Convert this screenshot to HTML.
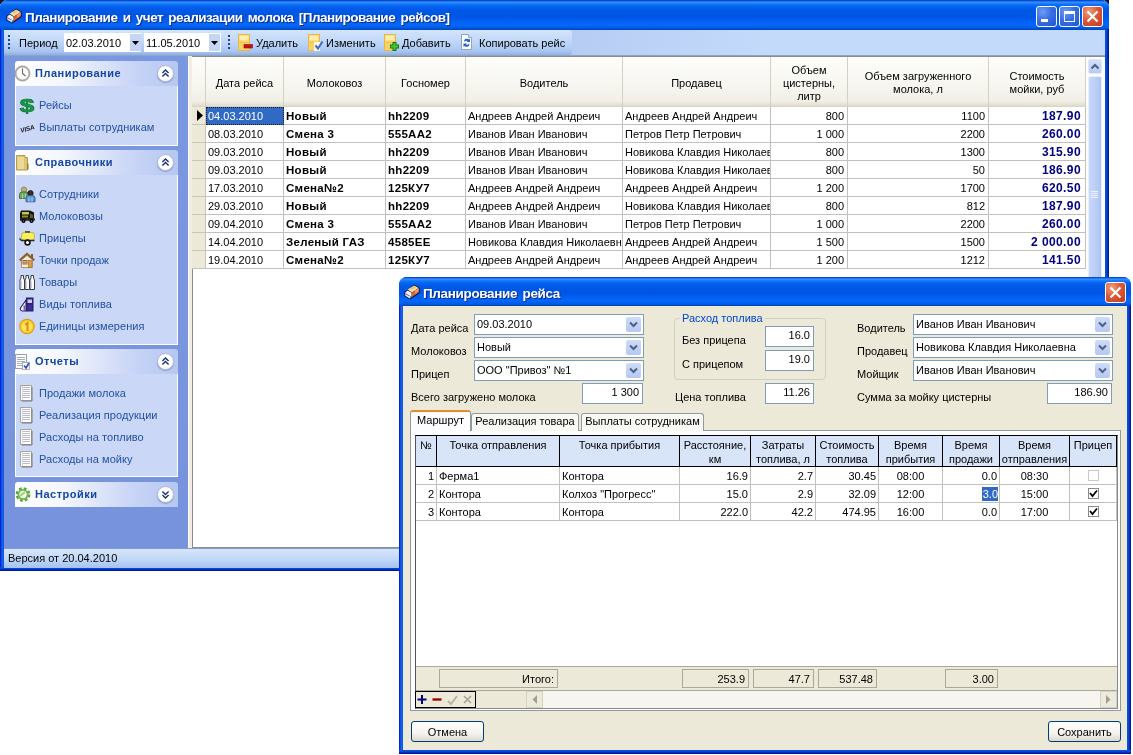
<!DOCTYPE html>
<html lang="ru">
<head>
<meta charset="utf-8">
<title>Планирование и учет реализации молока</title>
<style>
*{box-sizing:border-box;margin:0;padding:0}
html,body{width:1133px;height:755px;overflow:hidden;background:#fff}
body{position:relative;font-family:"Liberation Sans",sans-serif;font-size:11px;color:#000}
.abs,.abs>*{position:absolute}
div,span{white-space:nowrap}
#main,#dlg{will-change:transform}
/* ---------- main window ---------- */
#main{position:absolute;left:0;top:0;width:1109px;height:571px;background:#0a50d0;border-radius:7px 7px 0 0;overflow:hidden}
.cn{position:absolute;top:0;width:4px;height:4px;background:#16131f}
.tbar{position:absolute;left:0;top:0;right:0;height:30px;background:linear-gradient(to bottom,#0a3fb4 0%,#0a52e0 3%,#3a93ff 7%,#2a8bff 9%,#0f74fb 14%,#0464f0 22%,#0058e6 32%,#0055e4 55%,#0260f4 72%,#0468fb 82%,#035fee 90%,#0050d4 96%,#0042b8 100%)}
.ttl{position:absolute;color:#fff;font-weight:bold;font-size:13.5px;text-shadow:1px 1px 0 #0a2a80;letter-spacing:-.35px;word-spacing:2px}
.bl{position:absolute;left:0;top:29px;bottom:0;width:4px;background:linear-gradient(to right,#0019cf,#0831d9 25%,#166aee 50%,#0855dd 100%)}
.br{position:absolute;right:0;top:29px;bottom:0;width:4px;background:linear-gradient(to left,#00138c,#001ea0 25%,#0441d8 50%,#0855dd 100%)}
.bb{position:absolute;left:0;right:0;bottom:0;height:4px;background:linear-gradient(to top,#00138c,#001ea0 25%,#0441d8 50%,#0855dd 100%)}
.wb{position:absolute;width:21px;height:21px;border:1px solid #fff;border-radius:3px;background:radial-gradient(circle at 30% 25%,#6b9cf5 0%,#3a6fe3 45%,#2453cc 100%)}
.wb.cl{background:radial-gradient(circle at 30% 25%,#f0a080 0%,#dc5a38 45%,#c2391c 100%)}
#mtool{position:absolute;left:4px;top:30px;width:1101px;height:26px;background:linear-gradient(to right,#b6ccf3 0,#b6ccf3 568px,#c4dafb 760px,#c4dafb 100%)}
#mtool .bar{position:absolute;left:0;top:0;width:568px;height:25px;background:linear-gradient(to bottom,#d3e4fb 0%,#c1d8f8 45%,#a9c6f2 85%,#8fb0e6 100%);border-radius:0 3px 3px 0}
#mtool .ln{position:absolute;left:0;right:0;bottom:0;height:1px;background:#93a3bf}
.t11{font-size:11px}
#side{position:absolute;left:4px;top:56px;width:184px;height:492px;background:linear-gradient(to bottom,#7a98e0,#7893dd)}
.ph{position:absolute;left:11px;width:163px;height:25px;border-radius:3px 3px 0 0;background:linear-gradient(to right,#ffffff 0%,#f3f6fd 30%,#c6d3f6 75%,#b6c7f0 100%)}
.ph b{position:absolute;left:20px;top:6px;font-size:11px;color:#1546a6;letter-spacing:.5px}
.pb{position:absolute;left:11px;width:163px;background:#cbd7f6;border:1px solid #fff;border-top:none}
.it{position:absolute;left:23px;color:#2050a8;font-size:11px;letter-spacing:.05px}
.chev{position:absolute;right:4px;top:4px;width:17px;height:17px;border-radius:50%;background:#fff;box-shadow:0 1px 1px #8f9fc8;border:1px solid #aeb8d6}
#split{position:absolute;left:188px;top:56px;width:4px;height:492px;background:linear-gradient(to right,#fdfcf6 0,#fdfcf6 1px,#f3ece4 1px)}
#grid{position:absolute;left:192px;top:56px;width:913px;height:492px;background:#fff;border-left:1px solid #8e8e88;border-top:1px solid #8e8e88;border-bottom:1px solid #8e8e88}
#stat{position:absolute;left:4px;top:548px;width:1101px;height:20px;background:linear-gradient(to bottom,#d6e5fb 0%,#c3d9f8 50%,#a5c3f0 100%);border-top:1px solid #7f9fd8}
/* main grid */
.gh{position:absolute;top:0;height:50px;background:linear-gradient(to bottom,#fdfdfb 0%,#f6f5ef 60%,#f1efe6 88%,#e4e0d2 96%,#d8d2bd 100%);border-right:1px solid #d4d1c4;display:flex;align-items:center;justify-content:center;text-align:center;white-space:normal;line-height:13px;padding-top:2px}
.gr{position:absolute;left:0;height:18px;width:893px}
.gc{position:absolute;top:0;height:18px;border-right:1px solid #c0c0c0;border-bottom:1px solid #c0c0c0;line-height:18px;padding:0 3px 0 2px;overflow:hidden;background:#fff}
.gc.r{text-align:right}
.gc.b{font-weight:bold;font-size:11.5px;letter-spacing:.3px}
.gc.nv{color:#000080;font-weight:bold;font-size:12px;padding-right:4px;letter-spacing:.4px}
/* ---------- dialog ---------- */
#dlg{position:absolute;left:399px;top:277px;width:732px;height:477px;background:#0a50d0;border-radius:8px 8px 0 0;overflow:hidden}
#dbody{position:absolute;left:4px;top:29px;width:724px;height:444px;background:#ece9d8}
.lb{position:absolute;font-size:11px}
.cb{position:absolute;height:21px;background:#fff;border:1px solid #7f9db9;font-size:11px;line-height:19px;padding-left:2px}
.cb i{position:absolute;right:2px;top:2px;width:15px;height:15px;background:linear-gradient(to bottom,#cfdcf8,#b5c8f2);border-radius:2px}
.ed{position:absolute;height:21px;background:#fff;border:1px solid #7f9db9;font-size:11px;line-height:16px;text-align:right;padding-right:3px}
.tab{position:absolute;top:0;height:19px;border:1px solid #919b9c;border-bottom:none;border-radius:3px 3px 0 0;background:linear-gradient(to bottom,#fff,#f3f2ea);font-size:11px;line-height:18px;text-align:center}
.dh{position:absolute;top:0;height:31px;background:#d8e4f8;border-right:1px solid #000;border-bottom:1px solid #000;text-align:center;white-space:normal;line-height:14px;padding-top:2px}
.dc{position:absolute;height:18px;border-right:1px solid #c0c0c0;border-bottom:1px solid #c0c0c0;line-height:18px;padding:0 2px;overflow:hidden;background:#fff}
.dc.r{text-align:right}.dc.c{text-align:center}
.ft{position:absolute;top:2px;height:19px;border:1px solid #aca899;background:#ece9d8;text-align:right;padding-right:3px;line-height:18px}
.btn{position:absolute;height:23px;border:1px solid #003c74;border-radius:3px;background:linear-gradient(to bottom,#fff 0%,#f4f3ee 60%,#dcd8cc 100%);text-align:center;line-height:20px;font-size:11px}
</style>
</head>
<body>
<div class="cn" style="left:0"></div><div class="cn" style="left:1105px"></div>
<div id="main">
<div class="tbar"></div><div class="bl"></div><div class="br"></div><div class="bb"></div>
<svg style="position:absolute;left:6px;top:8px" width="16" height="16" viewBox="0 0 16 16"><path d="M10.3 .6L15.6 3.8V9L6.2 15.6L.4 12.2V8.2L3 6.2z" fill="#0c1040"/><path d="M3.6 5.4L10.2 1.6L14.6 4.1L8 8.4z" fill="#f8dea4"/><path d="M6 4.6L10.2 2.2L12 3.2L7.8 5.8z" fill="#eec468"/><path d="M8 8.6L14.7 4.3V8.6L8 13z" fill="#d8642a"/><path d="M11 6.5l3.7-2.2v3l-3.7 2.4z" fill="#e89a78"/><path d="M1.3 8.4L3.6 6.6L7.6 8.8V13.2L5.8 14.4L1.3 11.8z" fill="#f4f0f6"/><path d="M1.6 9.2L5.6 11.4V12.6L1.6 10.4z" fill="#7a62c0"/><path d="M5.8 14.3l1.8-1.2v-1.4l-1.8 1.2z" fill="#1a6a3a"/></svg>
<div class="ttl" style="left:25px;top:10px;letter-spacing:-.49px">Планирование и учет реализации молока [Планирование рейсов]</div>
<div class="wb" style="left:1036px;top:6px"><svg width="19" height="19"><rect x="4" y="12" width="7" height="3" fill="#fff"/></svg></div>
<div class="wb" style="left:1059px;top:6px"><svg width="19" height="19"><rect x="4.5" y="4.5" width="10" height="10" fill="none" stroke="#fff"/><rect x="4" y="4" width="11" height="3" fill="#fff"/></svg></div>
<div class="wb cl" style="left:1082px;top:6px"><svg width="19" height="19"><path d="M4.5 4.5 L14.5 14.5 M14.5 4.5 L4.5 14.5" stroke="#fff" stroke-width="2.2"/></svg></div>
<div id="mtool"><div class="bar"></div><div class="ln"></div>
<svg style="position:absolute;left:4px;top:5px" width="3" height="16"><g fill="#27408b"><rect x="0" y="0" width="2" height="2"/><rect x="0" y="4" width="2" height="2"/><rect x="0" y="8" width="2" height="2"/><rect x="0" y="12" width="2" height="2"/></g></svg>
<div class="lb" style="left:15px;top:7px">Период</div>
<div style="position:absolute;left:60px;top:3px;width:77px;height:19px;background:#fff"></div>
<div class="lb" style="left:62px;top:7px">02.03.2010</div>
<div style="position:absolute;left:126px;top:4px;width:11px;height:17px;background:#c4d5f5"></div>
<svg style="position:absolute;left:128px;top:11px" width="7" height="4"><path d="M0 0h7L3.5 4z" fill="#000"/></svg>
<div style="position:absolute;left:140px;top:3px;width:77px;height:19px;background:#fff"></div>
<div class="lb" style="left:142px;top:7px">11.05.2010</div>
<div style="position:absolute;left:205px;top:4px;width:11px;height:17px;background:#c4d5f5"></div>
<svg style="position:absolute;left:207px;top:11px" width="7" height="4"><path d="M0 0h7L3.5 4z" fill="#000"/></svg>
<svg style="position:absolute;left:224px;top:5px" width="3" height="16"><g fill="#27408b"><rect x="0" y="0" width="2" height="2"/><rect x="0" y="4" width="2" height="2"/><rect x="0" y="8" width="2" height="2"/><rect x="0" y="12" width="2" height="2"/></g></svg>
<svg style="position:absolute;left:233px;top:3px" width="17" height="19" viewBox="0 0 17 19"><rect x="1.500" y="1.500" width="11" height="16" fill="#f9d266" stroke="#e9b64a"/><rect x="2.500" y="2.500" width="9" height="5" fill="#fdeeb0"/><path d="M2.500 9.500h9" stroke="#f4c250"/><rect x="7" y="11.500" width="8.500" height="3.500" fill="#c81414" stroke="#8a0f0f" stroke-width=".6"/></svg>
<div class="lb" style="left:252px;top:7px">Удалить</div>
<svg style="position:absolute;left:303px;top:3px" width="17" height="19" viewBox="0 0 17 19"><rect x="1.500" y="1.500" width="11" height="16" fill="#f9d266" stroke="#e9b64a"/><rect x="2.500" y="2.500" width="9" height="5" fill="#fdeeb0"/><path d="M2.500 9.500h9" stroke="#f4c250"/><rect x="7" y="9" width="6" height="9" fill="#fff" opacity=".85"/><path d="M8.500 12.500l2.500 3 4.500-7" fill="none" stroke="#4668c8" stroke-width="2"/></svg>
<div class="lb" style="left:322px;top:7px">Изменить</div>
<svg style="position:absolute;left:379px;top:3px" width="17" height="19" viewBox="0 0 17 19"><rect x="1.500" y="1.500" width="11" height="16" fill="#f9d266" stroke="#e9b64a"/><rect x="2.500" y="2.500" width="9" height="5" fill="#fdeeb0"/><path d="M2.500 9.500h9" stroke="#f4c250"/><path d="M11.500 9v9M7 13.500h9" stroke="#107a10" stroke-width="4"/><path d="M11.500 10v7M8 13.500h7" stroke="#48c838" stroke-width="2"/></svg>
<div class="lb" style="left:398px;top:7px">Добавить</div>
<svg style="position:absolute;left:455px;top:3px" width="17" height="19" viewBox="0 0 17 19"><path d="M2.5 1.5h7l3 3v12h-10z" fill="#fdfdfd" stroke="#93a3c4"/><path d="M9.5 1.5v3h3" fill="#dfe6f4" stroke="#93a3c4"/><path d="M5 8a3 3 0 0 1 5-1.5l1-1v3.5h-3.500l1-1a1.600 1.600 0 0 0-2.500.8z M10.500 11.500a3 3 0 0 1-5 1.500l-1 1v-3.500h3.500l-1 1a1.600 1.600 0 0 0 2.500-.8z" fill="#2a62c8"/></svg>
<div class="lb" style="left:475px;top:7px">Копировать рейс</div>
</div>
<div id="side">
<div class="ph" style="top:5px"><svg style="position:absolute;left:0px;top:4px" width="17" height="17" viewBox="0 0 17 17"><circle cx="7.500" cy="8.500" r="6.800" fill="#fbfbfb" stroke="#b9b1a7" stroke-width="1.700"/><circle cx="7.500" cy="8.500" r="7.600" fill="none" stroke="#8f8a84" stroke-width=".5"/><path d="M7.500 3.500v5l3 2.500" fill="none" stroke="#6a6a6a" stroke-width="1.100"/></svg><b>Планирование</b><div class="chev"><svg width="15" height="15" viewBox="0 0 16 17"><path d="M4.500 8l3.500-3.500 3.500 3.500M4.500 12l3.500-3.500 3.500 3.500" fill="none" stroke="#15306e" stroke-width="1.500"/></svg></div></div>
<div class="pb" style="top:30px;height:60px">
<svg style="position:absolute;left:3px;top:11px" width="17" height="17" viewBox="0 0 17 17"><text x="0" y="0" font-size="18" font-weight="bold" fill="#199a4a" stroke="#0d7a36" stroke-width=".7" text-anchor="middle" font-family="Liberation Sans,sans-serif" transform="translate(8 14.500) scale(1.450 1)">$</text></svg>
<span class="it" style="top:13px">Рейсы</span>
<svg style="position:absolute;left:3px;top:33px" width="17" height="17" viewBox="0 0 17 17"><text x="8" y="12" font-size="6.500" font-weight="bold" font-style="italic" fill="#15151f" text-anchor="middle" font-family="Liberation Sans,sans-serif" transform="rotate(-16 8 9)" letter-spacing="-.2">VISA</text></svg>
<span class="it" style="top:35px">Выплаты сотрудникам</span>
</div>
<div class="ph" style="top:94px"><svg style="position:absolute;left:0px;top:4px" width="17" height="17" viewBox="0 0 17 17"><path d="M1.500 1.500h8.500v2h2.500v12.500h-11z" fill="#dcc474" stroke="#b79d49"/><path d="M2.500 3h6.500v12h-6.500z" fill="#ead996"/><path d="M12 9.500h1.500v6h-1.500z" fill="#8c7a3a"/></svg><b>Справочники</b><div class="chev"><svg width="15" height="15" viewBox="0 0 16 17"><path d="M4.500 8l3.500-3.500 3.500 3.500M4.500 12l3.500-3.500 3.500 3.500" fill="none" stroke="#15306e" stroke-width="1.500"/></svg></div></div>
<div class="pb" style="top:119px;height:170px">
<svg style="position:absolute;left:3px;top:11px" width="17" height="17" viewBox="0 0 17 17"><circle cx="5" cy="3.700" r="2.700" fill="#c9a97c" stroke="#6f7f4f" stroke-width=".8"/><path d="M.5 12.500v-4q0-2.500 2.500-2.500h4q2.500 0 2.500 2.500v4z" fill="#6fa763" stroke="#3f6f3b" stroke-width=".9"/><path d="M3.500 8v4.500M6.500 8v4.500" stroke="#b6d6a8" stroke-width=".9"/><circle cx="11.500" cy="7.200" r="2.700" fill="#3b2a20" stroke="#1f1a18" stroke-width=".8"/><path d="M7 15.800v-3.800q0-2.500 2.500-2.500h4q2.500 0 2.500 2.500v3.800z" fill="#5f96d6" stroke="#2d5c9c" stroke-width=".9"/><path d="M10 11.500v4.300M13 11.500v4.300" stroke="#c6dcf4" stroke-width=".9"/></svg>
<span class="it" style="top:13px">Сотрудники</span>
<svg style="position:absolute;left:3px;top:33px" width="17" height="17" viewBox="0 0 17 17"><path d="M2 2.500h9l4 2v8h-14v-7z" fill="#15150f"/><path d="M3 4h7v2.500h-7z" fill="#c8c850"/><path d="M3 7.500h6v2h-6z" fill="#8f8f38"/><path d="M11 5.500l3 1.200v3.300h-3z" fill="#5c5c2a"/><path d="M1 10.500h15v2h-15z" fill="#2b2b18"/><circle cx="4.500" cy="13" r="2.100" fill="#050505"/><circle cx="12.500" cy="13" r="2.100" fill="#050505"/><circle cx="4.500" cy="13" r=".8" fill="#777"/><circle cx="12.500" cy="13" r=".8" fill="#777"/></svg>
<span class="it" style="top:35px">Молоковозы</span>
<svg style="position:absolute;left:3px;top:55px" width="17" height="17" viewBox="0 0 17 17"><rect x="2.500" y="2.500" width="13" height="8" rx="3" fill="#f7ef5f" stroke="#b9b13a"/><path d="M6 2.500h5v-1.200h-5z" fill="#2b2b2b"/><path d="M.5 8.500l2 2h13" fill="none" stroke="#2a2a2a" stroke-width="1.300"/><circle cx="8.500" cy="12.500" r="2.400" fill="#fff" stroke="#141414" stroke-width="1.700"/></svg>
<span class="it" style="top:57px">Прицепы</span>
<svg style="position:absolute;left:3px;top:77px" width="17" height="17" viewBox="0 0 17 17"><path d="M12 2h2v4h-2z" fill="#8a5a30"/><path d="M.8 8.300L8 2l7.200 6.300" fill="none" stroke="#8a5a30" stroke-width="2.200"/><path d="M2.500 8l5.500-4.600 5.500 4.600v7.500h-11z" fill="#f9eed4" stroke="#a98658" stroke-width=".9"/><rect x="4" y="8.500" width="4" height="3.500" fill="#fff" stroke="#8a5a30" stroke-width=".9"/><path d="M6 8.500v3.500M4 10.200h4" stroke="#8a5a30" stroke-width=".7"/><rect x="9.500" y="8.500" width="2.800" height="7" fill="#e3a23c" stroke="#a36a24" stroke-width=".7"/></svg>
<span class="it" style="top:79px">Точки продаж</span>
<svg style="position:absolute;left:3px;top:99px" width="17" height="17" viewBox="0 0 17 17"><path d="M1 15.500v-9.500l1-2v-2.500h2.500v2.500l1 2v9.500z M6 15.500v-9.500l1-2v-2.500h2.500v2.500l1 2v9.500z M11 15.500v-9.500l1-2v-2.500h2.500v2.500l1 2v9.500z" fill="#fdfdfd" stroke="#3a3d48" stroke-width="1"/><path d="M2.300 7v7M7.300 7v7M12.300 7v7" stroke="#c9ccd6" stroke-width="1"/></svg>
<span class="it" style="top:101px">Товары</span>
<svg style="position:absolute;left:3px;top:121px" width="17" height="17" viewBox="0 0 17 17"><path d="M7 1.500h7.500v14h-7.500z" fill="#2a2170"/><rect x="8.500" y="3.500" width="4.500" height="3.500" fill="#cfc9ee"/><rect x="8.500" y="8.500" width="4.500" height="5.500" fill="#3b2f98"/><path d="M7 4l-5.500 8q-.8 3 2.500 3h3z" fill="#f5f4fb" stroke="#2a2170" stroke-width="1.100"/><path d="M5.200 9.500v5" stroke="#2a2170" stroke-width="1"/></svg>
<span class="it" style="top:123px">Виды топлива</span>
<svg style="position:absolute;left:3px;top:143px" width="17" height="17" viewBox="0 0 17 17"><circle cx="8" cy="8.500" r="7.200" fill="#f8d21e" stroke="#e39a1c" stroke-width="1.200"/><circle cx="8" cy="8.500" r="5.300" fill="#fbe25a"/><path d="M6.200 6.800l2.300-1.800v8" stroke="#e08a18" stroke-width="2" fill="none"/></svg>
<span class="it" style="top:145px">Единицы измерения</span>
</div>
<div class="ph" style="top:293px"><svg style="position:absolute;left:0px;top:4px" width="17" height="17" viewBox="0 0 17 17"><rect x=".5" y="1.500" width="11" height="14" fill="#fff" stroke="#9a9fae"/><path d="M2 4.500h8M2 6.500h8M2 8.500h8M2 10.500h5M2 12.500h5" stroke="#aab0be" stroke-width="1"/><rect x="7.500" y="9.500" width="7" height="7" fill="#fff" stroke="#9a9fae" stroke-width=".8"/><path d="M9 12.500l2 2.500 3-5" fill="none" stroke="#3553c0" stroke-width="1.700"/></svg><b>Отчеты</b><div class="chev"><svg width="15" height="15" viewBox="0 0 16 17"><path d="M4.500 8l3.500-3.500 3.500 3.500M4.500 12l3.500-3.500 3.500 3.500" fill="none" stroke="#15306e" stroke-width="1.500"/></svg></div></div>
<div class="pb" style="top:318px;height:103px">
<svg style="position:absolute;left:3px;top:11px" width="17" height="17" viewBox="0 0 17 17"><path d="M1.500 .5h11v15h-11z" fill="#fff" stroke="#a6a49c"/><path d="M13 2v14h-10" fill="none" stroke="#7f7d76" stroke-width="1"/><path d="M3 2.500h8M3 4.500h8M3 6.500h8M3 8.500h8M3 10.500h8M3 12.500h8" stroke="#b9bcc8" stroke-width="1"/><path d="M3.500 1v14" stroke="#d6d8e0" stroke-width="1"/></svg>
<span class="it" style="top:13px">Продажи молока</span>
<svg style="position:absolute;left:3px;top:33px" width="17" height="17" viewBox="0 0 17 17"><path d="M1.500 .5h11v15h-11z" fill="#fff" stroke="#a6a49c"/><path d="M13 2v14h-10" fill="none" stroke="#7f7d76" stroke-width="1"/><path d="M3 2.500h8M3 4.500h8M3 6.500h8M3 8.500h8M3 10.500h8M3 12.500h8" stroke="#b9bcc8" stroke-width="1"/><path d="M3.500 1v14" stroke="#d6d8e0" stroke-width="1"/></svg>
<span class="it" style="top:35px">Реализация продукции</span>
<svg style="position:absolute;left:3px;top:55px" width="17" height="17" viewBox="0 0 17 17"><path d="M1.500 .5h11v15h-11z" fill="#fff" stroke="#a6a49c"/><path d="M13 2v14h-10" fill="none" stroke="#7f7d76" stroke-width="1"/><path d="M3 2.500h8M3 4.500h8M3 6.500h8M3 8.500h8M3 10.500h8M3 12.500h8" stroke="#b9bcc8" stroke-width="1"/><path d="M3.500 1v14" stroke="#d6d8e0" stroke-width="1"/></svg>
<span class="it" style="top:57px">Расходы на топливо</span>
<svg style="position:absolute;left:3px;top:77px" width="17" height="17" viewBox="0 0 17 17"><path d="M1.500 .5h11v15h-11z" fill="#fff" stroke="#a6a49c"/><path d="M13 2v14h-10" fill="none" stroke="#7f7d76" stroke-width="1"/><path d="M3 2.500h8M3 4.500h8M3 6.500h8M3 8.500h8M3 10.500h8M3 12.500h8" stroke="#b9bcc8" stroke-width="1"/><path d="M3.500 1v14" stroke="#d6d8e0" stroke-width="1"/></svg>
<span class="it" style="top:79px">Расходы на мойку</span>
</div>
<div class="ph" style="top:426px"><svg style="position:absolute;left:0px;top:4px" width="17" height="17" viewBox="0 0 17 17"><circle cx="8" cy="8.500" r="5.600" fill="none" stroke="#58a636" stroke-width="3.600" stroke-dasharray="2.500 1.900"/><circle cx="8" cy="8.500" r="4.600" fill="#f4faf0" stroke="#6fb948" stroke-width="1.800"/><path d="M5 10l5-4" stroke="#9ed07e" stroke-width="2"/></svg><b>Настройки</b><div class="chev"><svg width="15" height="15" viewBox="0 0 16 17"><path d="M4.500 5l3.500 3.500 3.500-3.500M4.500 9l3.500 3.500 3.500-3.500" fill="none" stroke="#15306e" stroke-width="1.500"/></svg></div></div>
</div>
<div id="split"></div>
<div id="grid">
<div class="gh" style="left:-1px;width:14px"></div>
<div class="gh" style="left:13px;width:78px">Дата рейса</div>
<div class="gh" style="left:91px;width:102px">Молоковоз</div>
<div class="gh" style="left:193px;width:80px">Госномер</div>
<div class="gh" style="left:273px;width:157px">Водитель</div>
<div class="gh" style="left:430px;width:148px">Продавец</div>
<div class="gh" style="left:578px;width:77px">Объем<br>цистерны,<br>литр</div>
<div class="gh" style="left:655px;width:141px">Объем загруженного<br>молока, л</div>
<div class="gh" style="left:796px;width:97px">Стоимость<br>мойки, руб</div>
<div style="position:absolute;left:0;top:50px;width:893px;height:1px;background:#fff"></div>
<div class="gr" style="top:50px">
<div class="gc" style="left:-1px;width:14px;background:#ece9d8;border-color:#c9c6b8;padding:0"><svg width="13" height="17"><path d="M5 3v11l6-5.5z" fill="#000"/></svg></div>
<div class="gc " style="left:13px;width:78px;background:#316ac5;color:#fff;outline:1px dotted #1a1a30;outline-offset:-1px;border-color:#316ac5">04.03.2010</div>
<div class="gc b" style="left:91px;width:102px">Новый</div>
<div class="gc b" style="left:193px;width:80px">hh2209</div>
<div class="gc " style="left:273px;width:157px">Андреев Андрей Андреич</div>
<div class="gc " style="left:430px;width:148px">Андреев Андрей Андреич</div>
<div class="gc r" style="left:578px;width:77px">800</div>
<div class="gc r" style="left:655px;width:141px">1100</div>
<div class="gc r nv" style="left:796px;width:97px">187.90</div>
</div>
<div class="gr" style="top:68px">
<div class="gc" style="left:-1px;width:14px;background:#ece9d8;border-color:#c9c6b8;padding:0"></div>
<div class="gc " style="left:13px;width:78px">08.03.2010</div>
<div class="gc b" style="left:91px;width:102px">Смена 3</div>
<div class="gc b" style="left:193px;width:80px">555АА2</div>
<div class="gc " style="left:273px;width:157px">Иванов Иван Иванович</div>
<div class="gc " style="left:430px;width:148px">Петров Петр Петрович</div>
<div class="gc r" style="left:578px;width:77px">1 000</div>
<div class="gc r" style="left:655px;width:141px">2200</div>
<div class="gc r nv" style="left:796px;width:97px">260.00</div>
</div>
<div class="gr" style="top:86px">
<div class="gc" style="left:-1px;width:14px;background:#ece9d8;border-color:#c9c6b8;padding:0"></div>
<div class="gc " style="left:13px;width:78px">09.03.2010</div>
<div class="gc b" style="left:91px;width:102px">Новый</div>
<div class="gc b" style="left:193px;width:80px">hh2209</div>
<div class="gc " style="left:273px;width:157px">Иванов Иван Иванович</div>
<div class="gc " style="left:430px;width:148px">Новикова Клавдия Николаевна</div>
<div class="gc r" style="left:578px;width:77px">800</div>
<div class="gc r" style="left:655px;width:141px">1300</div>
<div class="gc r nv" style="left:796px;width:97px">315.90</div>
</div>
<div class="gr" style="top:104px">
<div class="gc" style="left:-1px;width:14px;background:#ece9d8;border-color:#c9c6b8;padding:0"></div>
<div class="gc " style="left:13px;width:78px">09.03.2010</div>
<div class="gc b" style="left:91px;width:102px">Новый</div>
<div class="gc b" style="left:193px;width:80px">hh2209</div>
<div class="gc " style="left:273px;width:157px">Иванов Иван Иванович</div>
<div class="gc " style="left:430px;width:148px">Новикова Клавдия Николаевна</div>
<div class="gc r" style="left:578px;width:77px">800</div>
<div class="gc r" style="left:655px;width:141px">50</div>
<div class="gc r nv" style="left:796px;width:97px">186.90</div>
</div>
<div class="gr" style="top:122px">
<div class="gc" style="left:-1px;width:14px;background:#ece9d8;border-color:#c9c6b8;padding:0"></div>
<div class="gc " style="left:13px;width:78px">17.03.2010</div>
<div class="gc b" style="left:91px;width:102px">Смена№2</div>
<div class="gc b" style="left:193px;width:80px">125КУ7</div>
<div class="gc " style="left:273px;width:157px">Андреев Андрей Андреич</div>
<div class="gc " style="left:430px;width:148px">Андреев Андрей Андреич</div>
<div class="gc r" style="left:578px;width:77px">1 200</div>
<div class="gc r" style="left:655px;width:141px">1700</div>
<div class="gc r nv" style="left:796px;width:97px">620.50</div>
</div>
<div class="gr" style="top:140px">
<div class="gc" style="left:-1px;width:14px;background:#ece9d8;border-color:#c9c6b8;padding:0"></div>
<div class="gc " style="left:13px;width:78px">29.03.2010</div>
<div class="gc b" style="left:91px;width:102px">Новый</div>
<div class="gc b" style="left:193px;width:80px">hh2209</div>
<div class="gc " style="left:273px;width:157px">Андреев Андрей Андреич</div>
<div class="gc " style="left:430px;width:148px">Новикова Клавдия Николаевна</div>
<div class="gc r" style="left:578px;width:77px">800</div>
<div class="gc r" style="left:655px;width:141px">812</div>
<div class="gc r nv" style="left:796px;width:97px">187.90</div>
</div>
<div class="gr" style="top:158px">
<div class="gc" style="left:-1px;width:14px;background:#ece9d8;border-color:#c9c6b8;padding:0"></div>
<div class="gc " style="left:13px;width:78px">09.04.2010</div>
<div class="gc b" style="left:91px;width:102px">Смена 3</div>
<div class="gc b" style="left:193px;width:80px">555АА2</div>
<div class="gc " style="left:273px;width:157px">Иванов Иван Иванович</div>
<div class="gc " style="left:430px;width:148px">Петров Петр Петрович</div>
<div class="gc r" style="left:578px;width:77px">1 000</div>
<div class="gc r" style="left:655px;width:141px">2200</div>
<div class="gc r nv" style="left:796px;width:97px">260.00</div>
</div>
<div class="gr" style="top:176px">
<div class="gc" style="left:-1px;width:14px;background:#ece9d8;border-color:#c9c6b8;padding:0"></div>
<div class="gc " style="left:13px;width:78px">14.04.2010</div>
<div class="gc b" style="left:91px;width:102px">Зеленый ГАЗ</div>
<div class="gc b" style="left:193px;width:80px">4585ЕЕ</div>
<div class="gc " style="left:273px;width:157px">Новикова Клавдия Николаевна</div>
<div class="gc " style="left:430px;width:148px">Андреев Андрей Андреич</div>
<div class="gc r" style="left:578px;width:77px">1 500</div>
<div class="gc r" style="left:655px;width:141px">1500</div>
<div class="gc r nv" style="left:796px;width:97px">2 000.00</div>
</div>
<div class="gr" style="top:194px">
<div class="gc" style="left:-1px;width:14px;background:#ece9d8;border-color:#c9c6b8;padding:0"></div>
<div class="gc " style="left:13px;width:78px">19.04.2010</div>
<div class="gc b" style="left:91px;width:102px">Смена№2</div>
<div class="gc b" style="left:193px;width:80px">125КУ7</div>
<div class="gc " style="left:273px;width:157px">Андреев Андрей Андреич</div>
<div class="gc " style="left:430px;width:148px">Андреев Андрей Андреич</div>
<div class="gc r" style="left:578px;width:77px">1 200</div>
<div class="gc r" style="left:655px;width:141px">1212</div>
<div class="gc r nv" style="left:796px;width:97px">141.50</div>
</div>
<div style="position:absolute;left:893px;top:0;width:19px;height:491px;background:#fff"></div>
<div style="position:absolute;left:894px;top:0;width:18px;height:300px;background:#fdfdfb"></div>
<div style="position:absolute;left:895px;top:2px;width:14px;height:15px;background:linear-gradient(to bottom,#d3e0fb,#b8cbf5);border:1px solid #dfe8fc;border-radius:2px"><svg width="12" height="13"><path d="M2.500 8.500l3.500-3.500 3.500 3.500" fill="none" stroke="#4d6185" stroke-width="2"/></svg></div>
<div style="position:absolute;left:895px;top:19px;width:14px;height:240px;background:linear-gradient(to right,#c9d8fb,#b9cdf8 60%,#aec3f0);border:1px solid #e8effd;border-radius:2px"></div>
<svg style="position:absolute;left:898px;top:134px" width="8" height="8"><path d="M0 .5h7M0 2.5h7M0 4.5h7M0 6.5h7" stroke="#eef3ff"/></svg>
</div>
<div id="stat"><div class="lb" style="left:4px;top:3px">Версия от 20.04.2010</div></div>
</div>
<div id="dlg">
<div class="tbar" style="height:29px"></div><div class="bl"></div><div class="br"></div><div class="bb"></div>
<svg style="position:absolute;left:5px;top:7px" width="16" height="16" viewBox="0 0 16 16"><path d="M10.3 .6L15.6 3.8V9L6.2 15.6L.4 12.2V8.2L3 6.2z" fill="#0c1040"/><path d="M3.6 5.4L10.2 1.6L14.6 4.1L8 8.4z" fill="#f8dea4"/><path d="M6 4.6L10.2 2.2L12 3.2L7.8 5.8z" fill="#eec468"/><path d="M8 8.6L14.7 4.3V8.6L8 13z" fill="#d8642a"/><path d="M11 6.5l3.7-2.2v3l-3.7 2.4z" fill="#e89a78"/><path d="M1.3 8.4L3.6 6.6L7.6 8.8V13.2L5.8 14.4L1.3 11.8z" fill="#f4f0f6"/><path d="M1.6 9.2L5.6 11.4V12.6L1.6 10.4z" fill="#7a62c0"/><path d="M5.8 14.3l1.8-1.2v-1.4l-1.8 1.2z" fill="#1a6a3a"/></svg>
<div class="ttl" style="left:24px;top:9px">Планирование рейса</div>
<div class="wb cl" style="left:706px;top:5px"><svg width="19" height="19"><path d="M4.5 4.5 L14.5 14.5 M14.5 4.5 L4.5 14.5" stroke="#fff" stroke-width="2.2"/></svg></div>
<div id="dbody">
<div class="lb" style="left:8px;top:16px">Дата рейса</div>
<div class="lb" style="left:8px;top:39px">Молоковоз</div>
<div class="lb" style="left:8px;top:62px">Прицеп</div>
<div class="lb" style="left:8px;top:85px">Всего загружено молока</div>
<div class="cb" style="left:71px;top:8px;width:170px">09.03.2010<i><svg width="15" height="15"><path d="M4 5.500l3.500 3.500 3.500-3.500" fill="none" stroke="#4d6185" stroke-width="2"/></svg></i></div>
<div class="cb" style="left:71px;top:31px;width:170px">Новый<i><svg width="15" height="15"><path d="M4 5.500l3.500 3.500 3.500-3.500" fill="none" stroke="#4d6185" stroke-width="2"/></svg></i></div>
<div class="cb" style="left:71px;top:54px;width:170px">ООО "Привоз" №1<i><svg width="15" height="15"><path d="M4 5.500l3.500 3.500 3.500-3.500" fill="none" stroke="#4d6185" stroke-width="2"/></svg></i></div>
<div class="ed" style="left:179px;top:77px;width:61px;height:21px">1 300</div>
<div style="position:absolute;left:271px;top:12px;width:152px;height:62px;border:1px solid #d0d0bf;border-radius:4px"></div>
<div class="lb" style="left:277px;top:6px;color:#0046d5;background:#ece9d8;padding:0 2px">Расход топлива</div>
<div class="lb" style="left:279px;top:28px">Без прицепа</div>
<div class="lb" style="left:279px;top:52px">С прицепом</div>
<div class="lb" style="left:272px;top:85px">Цена топлива</div>
<div class="ed" style="left:362px;top:20px;width:49px;height:21px">16.0</div>
<div class="ed" style="left:362px;top:44px;width:49px;height:21px">19.0</div>
<div class="ed" style="left:362px;top:77px;width:49px;height:21px">11.26</div>
<div class="lb" style="left:454px;top:16px">Водитель</div>
<div class="lb" style="left:454px;top:39px">Продавец</div>
<div class="lb" style="left:454px;top:62px">Мойщик</div>
<div class="lb" style="left:454px;top:85px">Сумма за мойку цистерны</div>
<div class="cb" style="left:510px;top:8px;width:200px">Иванов Иван Иванович<i><svg width="15" height="15"><path d="M4 5.500l3.500 3.500 3.500-3.500" fill="none" stroke="#4d6185" stroke-width="2"/></svg></i></div>
<div class="cb" style="left:510px;top:31px;width:200px">Новикова Клавдия Николаевна<i><svg width="15" height="15"><path d="M4 5.500l3.500 3.500 3.500-3.500" fill="none" stroke="#4d6185" stroke-width="2"/></svg></i></div>
<div class="cb" style="left:510px;top:54px;width:200px">Иванов Иван Иванович<i><svg width="15" height="15"><path d="M4 5.500l3.500 3.500 3.500-3.500" fill="none" stroke="#4d6185" stroke-width="2"/></svg></i></div>
<div class="ed" style="left:644px;top:77px;width:65px;height:21px">186.90</div>
<div style="position:absolute;left:7px;top:124px;width:711px;height:281px;border:1px solid #919b9c;background:#fcfcfe"></div>
<div class="tab" style="left:68px;top:107px;width:108px;height:18px;background:#f8f8f4;line-height:15px">Реализация товара</div>
<div class="tab" style="left:178px;top:107px;width:123px;height:18px;background:#f8f8f4;line-height:15px">Выплаты сотрудникам</div>
<div class="tab" style="left:7px;top:104px;width:61px;height:21px;background:#fcfcfe;border-top:2px solid #e68b2c;line-height:16px">Маршрут</div>
<div style="position:absolute;left:12px;top:129px;width:703px;height:274px;background:#fff;border:1px solid #8a8a8a;border-top-color:#000;border-left-color:#555"></div>
<div style="position:absolute;left:13px;top:130px;width:701px;height:272px">
<div class="dh" style="left:0px;width:21px">№</div>
<div class="dh" style="left:21px;width:123px">Точка отправления</div>
<div class="dh" style="left:144px;width:120px">Точка прибытия</div>
<div class="dh" style="left:264px;width:71px">Расстояние,<br>км</div>
<div class="dh" style="left:335px;width:65px">Затраты<br>топлива, л</div>
<div class="dh" style="left:400px;width:63px">Стоимость<br>топлива</div>
<div class="dh" style="left:463px;width:64px">Время<br>прибытия</div>
<div class="dh" style="left:527px;width:57px">Время<br>продажи</div>
<div class="dh" style="left:584px;width:70px">Время<br>отправления</div>
<div class="dh" style="left:654px;width:47px">Прицеп</div>
<div class="dc r" style="left:0px;top:31px;width:21px">1</div>
<div class="dc " style="left:21px;top:31px;width:123px">Ферма1</div>
<div class="dc " style="left:144px;top:31px;width:120px">Контора</div>
<div class="dc r" style="left:264px;top:31px;width:71px">16.9</div>
<div class="dc r" style="left:335px;top:31px;width:65px">2.7</div>
<div class="dc r" style="left:400px;top:31px;width:63px">30.45</div>
<div class="dc c" style="left:463px;top:31px;width:64px">08:00</div>
<div class="dc r" style="left:527px;top:31px;width:57px">0.0</div>
<div class="dc c" style="left:584px;top:31px;width:70px">08:30</div>
<div class="dc c" style="left:654px;top:31px;width:47px"><span style="display:inline-block;width:11px;height:11px;border:1px solid #c8c8c8;margin-top:3px;vertical-align:top;background:#fff"></span></div>
<div class="dc r" style="left:0px;top:49px;width:21px">2</div>
<div class="dc " style="left:21px;top:49px;width:123px">Контора</div>
<div class="dc " style="left:144px;top:49px;width:120px">Колхоз "Прогресс"</div>
<div class="dc r" style="left:264px;top:49px;width:71px">15.0</div>
<div class="dc r" style="left:335px;top:49px;width:65px">2.9</div>
<div class="dc r" style="left:400px;top:49px;width:63px">32.09</div>
<div class="dc c" style="left:463px;top:49px;width:64px">12:00</div>
<div class="dc r" style="left:527px;top:49px;width:57px"><span style="background:#316ac5;color:#fff;display:inline-block;height:14px;line-height:14px;padding:0 0 0 1px;margin-right:-1px">3.0</span></div>
<div class="dc c" style="left:584px;top:49px;width:70px">15:00</div>
<div class="dc c" style="left:654px;top:49px;width:47px"><span style="display:inline-block;width:11px;height:11px;border:1px solid #8a8a8a;margin-top:3px;vertical-align:top;background:#fff"><svg width="9" height="9" style="display:block"><path d="M1 4l2.5 3L8 1.5" fill="none" stroke="#000" stroke-width="1.8"/></svg></span></div>
<div class="dc r" style="left:0px;top:67px;width:21px">3</div>
<div class="dc " style="left:21px;top:67px;width:123px">Контора</div>
<div class="dc " style="left:144px;top:67px;width:120px">Контора</div>
<div class="dc r" style="left:264px;top:67px;width:71px">222.0</div>
<div class="dc r" style="left:335px;top:67px;width:65px">42.2</div>
<div class="dc r" style="left:400px;top:67px;width:63px">474.95</div>
<div class="dc c" style="left:463px;top:67px;width:64px">16:00</div>
<div class="dc r" style="left:527px;top:67px;width:57px">0.0</div>
<div class="dc c" style="left:584px;top:67px;width:70px">17:00</div>
<div class="dc c" style="left:654px;top:67px;width:47px"><span style="display:inline-block;width:11px;height:11px;border:1px solid #8a8a8a;margin-top:3px;vertical-align:top;background:#fff"><svg width="9" height="9" style="display:block"><path d="M1 4l2.5 3L8 1.5" fill="none" stroke="#000" stroke-width="1.8"/></svg></span></div>
<div style="position:absolute;left:0;top:230px;width:701px;height:24px;background:#ece9d8;border-top:1px solid #aca899">
<div class="ft" style="left:23px;width:119px">Итого:</div>
<div class="ft" style="left:266px;width:67px">253.9</div>
<div class="ft" style="left:337px;width:61px">47.7</div>
<div class="ft" style="left:402px;width:59px">537.48</div>
<div class="ft" style="left:529px;width:53px">3.00</div>
</div>
<div style="position:absolute;left:0;top:254px;width:701px;height:18px;background:#ece9d8;border-top:1px solid #aca899">
<div style="position:absolute;left:-1px;top:0;width:61px;height:17px;border:1px solid #000;background:#ece9d8"></div>
<svg style="position:absolute;left:0;top:1px" width="60" height="16"><path d="M6 3v9M1.5 7.5h9" stroke="#000080" stroke-width="2"/><path d="M16.5 7.5h9" stroke="#a00000" stroke-width="2.4"/><path d="M32 9l3 3 6-8" stroke="#b8b4a4" stroke-width="2" fill="none"/><path d="M48 4l7 7M55 4l-7 7" stroke="#a8a494" stroke-width="1.6"/></svg>
<div style="position:absolute;left:110px;top:0;width:591px;height:17px;background:#f6f5f0"></div>
<div style="position:absolute;left:110px;top:0;width:17px;height:17px;background:#eceadc;border:1px solid #d6d2c2"><svg width="15" height="15"><path d="M10 3v9l-4.500-4.500z" fill="#a39f8e"/></svg></div>
<div style="position:absolute;left:684px;top:0;width:17px;height:17px;background:#eceadc;border:1px solid #d6d2c2"><svg width="15" height="15"><path d="M5 3v9l4.500-4.500z" fill="#a39f8e"/></svg></div>
</div>
</div>
<div class="btn" style="left:8px;top:415px;width:73px;height:21px">Отмена</div>
<div class="btn" style="left:645px;top:415px;width:73px;height:21px">Сохранить</div>
</div></div>
</body>
</html>
